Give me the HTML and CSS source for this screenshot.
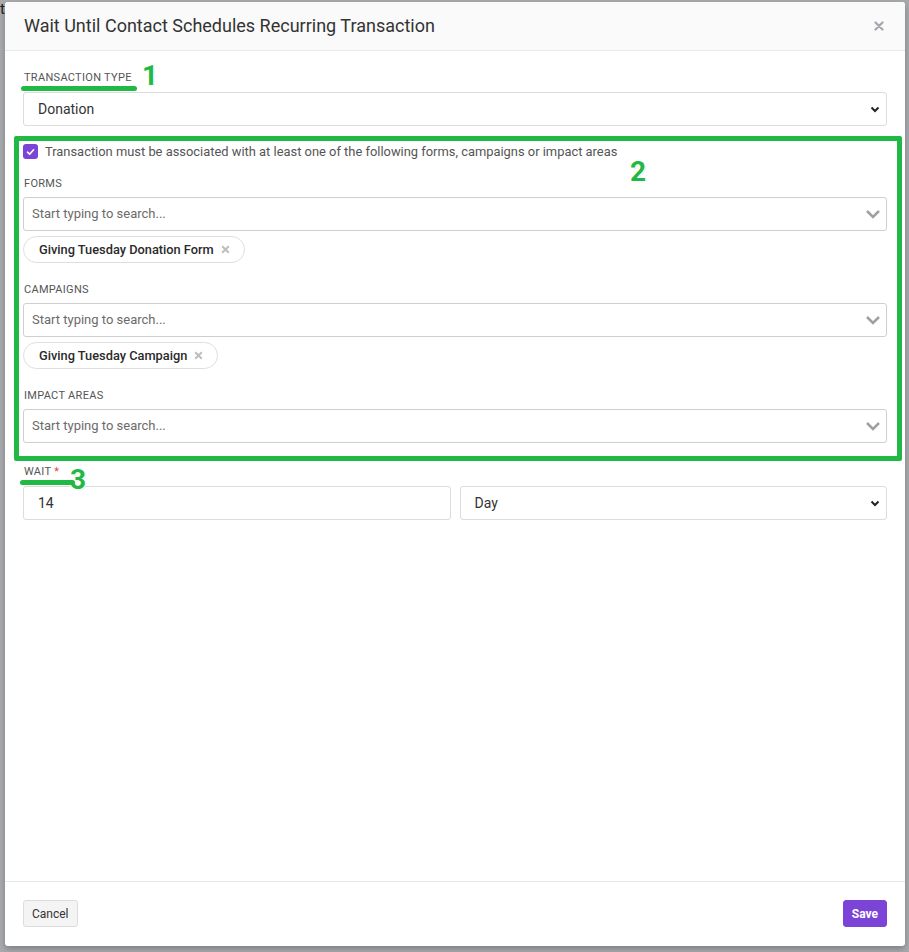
FILE: index.html
```html
<html lang="en">

<head>
    <meta charset="UTF-8">
    <meta name="viewport" content="width=device-width, initial-scale=1.0">
    <title>Wait Until Contact Schedules Recurring Transaction</title>

    <link rel="stylesheet" href="styles.css">
</head>

<body>
    <span class="behind">t</span>

    <!-- Step modal -->
    <div class="modal">
        <div class="modal-header">
            <h2>Wait Until Contact Schedules Recurring Transaction</h2>
            <svg class="close" width="10" height="10" viewBox="0 0 10 10"><path d="M1.5 1.5 L8.5 8.5 M8.5 1.5 L1.5 8.5" stroke="#a3a7ae" stroke-width="2.2" stroke-linecap="round"/></svg>
        </div>

        <div class="modal-body">
            <div class="field">
                <label class="lbl marked">Transaction Type<span class="num num-1">1</span></label>
                <select class="select">
                    <option>Donation</option>
                </select>
            </div>

            <!-- Association filters -->
            <div class="highlight">
                <span class="num num-2">2</span>
                <label class="check-row">
                    <span class="checkbox">
                        <svg width="9" height="8" viewBox="0 0 9 8"><path d="M1.5 4.2 L3.6 6.2 L7.6 1.8" fill="none" stroke="#fff" stroke-width="1.6" stroke-linecap="round" stroke-linejoin="round"/></svg>
                    </span>
                    Transaction must be associated with at least one of the following forms, campaigns or impact areas
                </label>

                <div class="field">
                    <label class="lbl">Forms</label>
                    <div class="search">Start typing to search...</div>
                    <div class="chips">
                        <span class="chip">Giving Tuesday Donation Form
                            <svg width="9" height="9" viewBox="0 0 9 9"><path d="M1.2 1.2 L7.8 7.8 M7.8 1.2 L1.2 7.8" stroke="#bdbdbd" stroke-width="2"/></svg>
                        </span>
                    </div>
                </div>

                <div class="field">
                    <label class="lbl">Campaigns</label>
                    <div class="search">Start typing to search...</div>
                    <div class="chips">
                        <span class="chip">Giving Tuesday Campaign
                            <svg width="9" height="9" viewBox="0 0 9 9"><path d="M1.2 1.2 L7.8 7.8 M7.8 1.2 L1.2 7.8" stroke="#bdbdbd" stroke-width="2"/></svg>
                        </span>
                    </div>
                </div>

                <div class="field last">
                    <label class="lbl">Impact Areas</label>
                    <div class="search">Start typing to search...</div>
                </div>
            </div>

            <div class="field">
                <label class="lbl marked short">Wait <span class="req">*</span><span class="num num-3">3</span></label>
                <div class="wait-row">
                    <input class="text-input" type="text" value="14">
                    <select class="select">
                        <option>Day</option>
                    </select>
                </div>
            </div>
        </div>

        <div class="modal-footer">
            <button class="btn">Cancel</button>
            <button class="btn btn-primary">Save</button>
        </div>
    </div>
</body>

</html>
```

FILE: styles.css
```css
body {
    font-family: Roboto, "Liberation Sans", sans-serif;
    margin: 0;
    padding: 0;
    background-color: #a9aaae;
    color: #333;
    height: 952px;
    overflow: hidden;
    position: relative;
}

.behind {
    position: absolute;
    left: 0;
    top: 0;
    font-size: 15px;
    color: #222;
}

.modal {
    margin: 2px 4px 0 5px;
    height: 944px;
    background-color: #fff;
    border-radius: 3px;
    box-shadow: 0 3px 6px rgba(0, 0, 0, 0.25);
    display: flex;
    flex-direction: column;
    position: relative;
}

.modal-header {
    height: 48px;
    display: flex;
    align-items: center;
    justify-content: space-between;
    padding: 0 21px 0 19px;
    background-color: #fafafa;
    border-bottom: 1px solid #e8e8e8;
    border-radius: 3px 3px 0 0;
}

.modal-header h2 {
    margin: 0 0 2px 0;
    font-size: 18px;
    font-weight: 400;
    color: #333;
}

.modal-body {
    flex: 1;
    padding: 20px 18px 0 18px;
}

.field {
    margin-bottom: 10px;
}

.lbl {
    display: inline-block;
    position: relative;
    font-size: 11px;
    letter-spacing: 0.3px;
    text-transform: uppercase;
    color: #555;
    margin: 0 0 7px 1px;
    line-height: 14px;
}

.lbl.marked::after {
    content: "";
    position: absolute;
    left: -3px;
    right: -5px;
    bottom: -6px;
    height: 5px;
    background-color: #22b845;
    border-radius: 3px;
}

.lbl.short::after {
    left: -4px;
    right: -16px;
}

.req {
    color: #e04545;
}

.num {
    position: absolute;
    font-size: 28px;
    font-weight: bold;
    color: #22b845;
    line-height: 1;
    text-shadow: 1px 1px 0 #fff, -1px -1px 0 #fff, 1px -1px 0 #fff, -1px 1px 0 #fff, 1px 1px 1px #bbb;
}

.num-1 {
    left: 118px;
    top: -9px;
}

.num-2 {
    left: 611px;
    top: 17px;
}

.num-3 {
    left: 46px;
    top: 1px;
}

.select {
    display: block;
    width: 100%;
    height: 34px;
    padding: 0 14px;
    font-family: inherit;
    font-size: 14px;
    color: #333;
    background-color: #fff;
    border: 1px solid #dcdcdc;
    border-radius: 3px;
    appearance: none;
    background-image: url("data:image/svg+xml;utf8,<svg xmlns='http://www.w3.org/2000/svg' width='10' height='7' viewBox='0 0 10 7'><path d='M1.5 1.5 L5 5 L8.5 1.5' fill='none' stroke='%23222' stroke-width='2'/></svg>");
    background-repeat: no-repeat;
    background-position: right 6px center;
}

.highlight {
    position: relative;
    margin: 0 -15px 0 -9px;
    padding: 3px 10px 13px 4px;
    border: 5px solid #22b845;
    border-radius: 2px;
}

.check-row {
    display: flex;
    align-items: center;
    gap: 7px;
    font-size: 12.9px;
    color: #555;
    margin-bottom: 18px;
}

.checkbox {
    width: 15px;
    height: 15px;
    border-radius: 3px;
    background-color: #7b44d6;
    display: flex;
    align-items: center;
    justify-content: center;
}

.search {
    height: 32px;
    line-height: 32px;
    padding: 0 8px;
    font-size: 13px;
    color: #6b6b6b;
    border: 1px solid #cfcfcf;
    border-radius: 3px;
    background-image: url("data:image/svg+xml;utf8,<svg xmlns='http://www.w3.org/2000/svg' width='16' height='10' viewBox='0 0 16 10'><path d='M2 2 L8 8 L14 2' fill='none' stroke='%23a0a0a0' stroke-width='2.5'/></svg>");
    background-repeat: no-repeat;
    background-position: right 5px center;
}

.field .lbl + .search {
    margin-top: -1px;
}

.chips {
    margin-top: 5px;
    margin-bottom: 20px;
}

.chip {
    display: inline-flex;
    align-items: center;
    height: 25px;
    padding: 0 14px 0 15px;
    border: 1px solid #dedede;
    border-radius: 14px;
    font-size: 12.8px;
    font-weight: 500;
    color: #2a2a2a;
    gap: 7px;
}

.field.last {
    margin-bottom: 0;
}

.highlight + .field {
    margin-top: 4px;
}

.wait-row {
    display: flex;
    gap: 9px;
}

.text-input {
    flex: 1;
    height: 34px;
    box-sizing: border-box;
    padding: 0 14px;
    font-family: inherit;
    font-size: 14px;
    color: #333;
    border: 1px solid #dcdcdc;
    border-radius: 3px;
}

.wait-row .select {
    flex: 1;
    width: auto;
}

.modal-footer {
    border-top: 1px solid #e8e8e8;
    padding: 18px 18px 19px 18px;
    display: flex;
    justify-content: space-between;
}

.btn {
    height: 27px;
    padding: 0 8px;
    font-family: inherit;
    font-size: 12px;
    color: #333;
    background-color: #f4f4f4;
    border: 1px solid #dcdcdc;
    border-radius: 3px;
}

.btn-primary {
    background-color: #7b44d6;
    border-color: #7b44d6;
    color: #fff;
    font-weight: bold;
}
```
